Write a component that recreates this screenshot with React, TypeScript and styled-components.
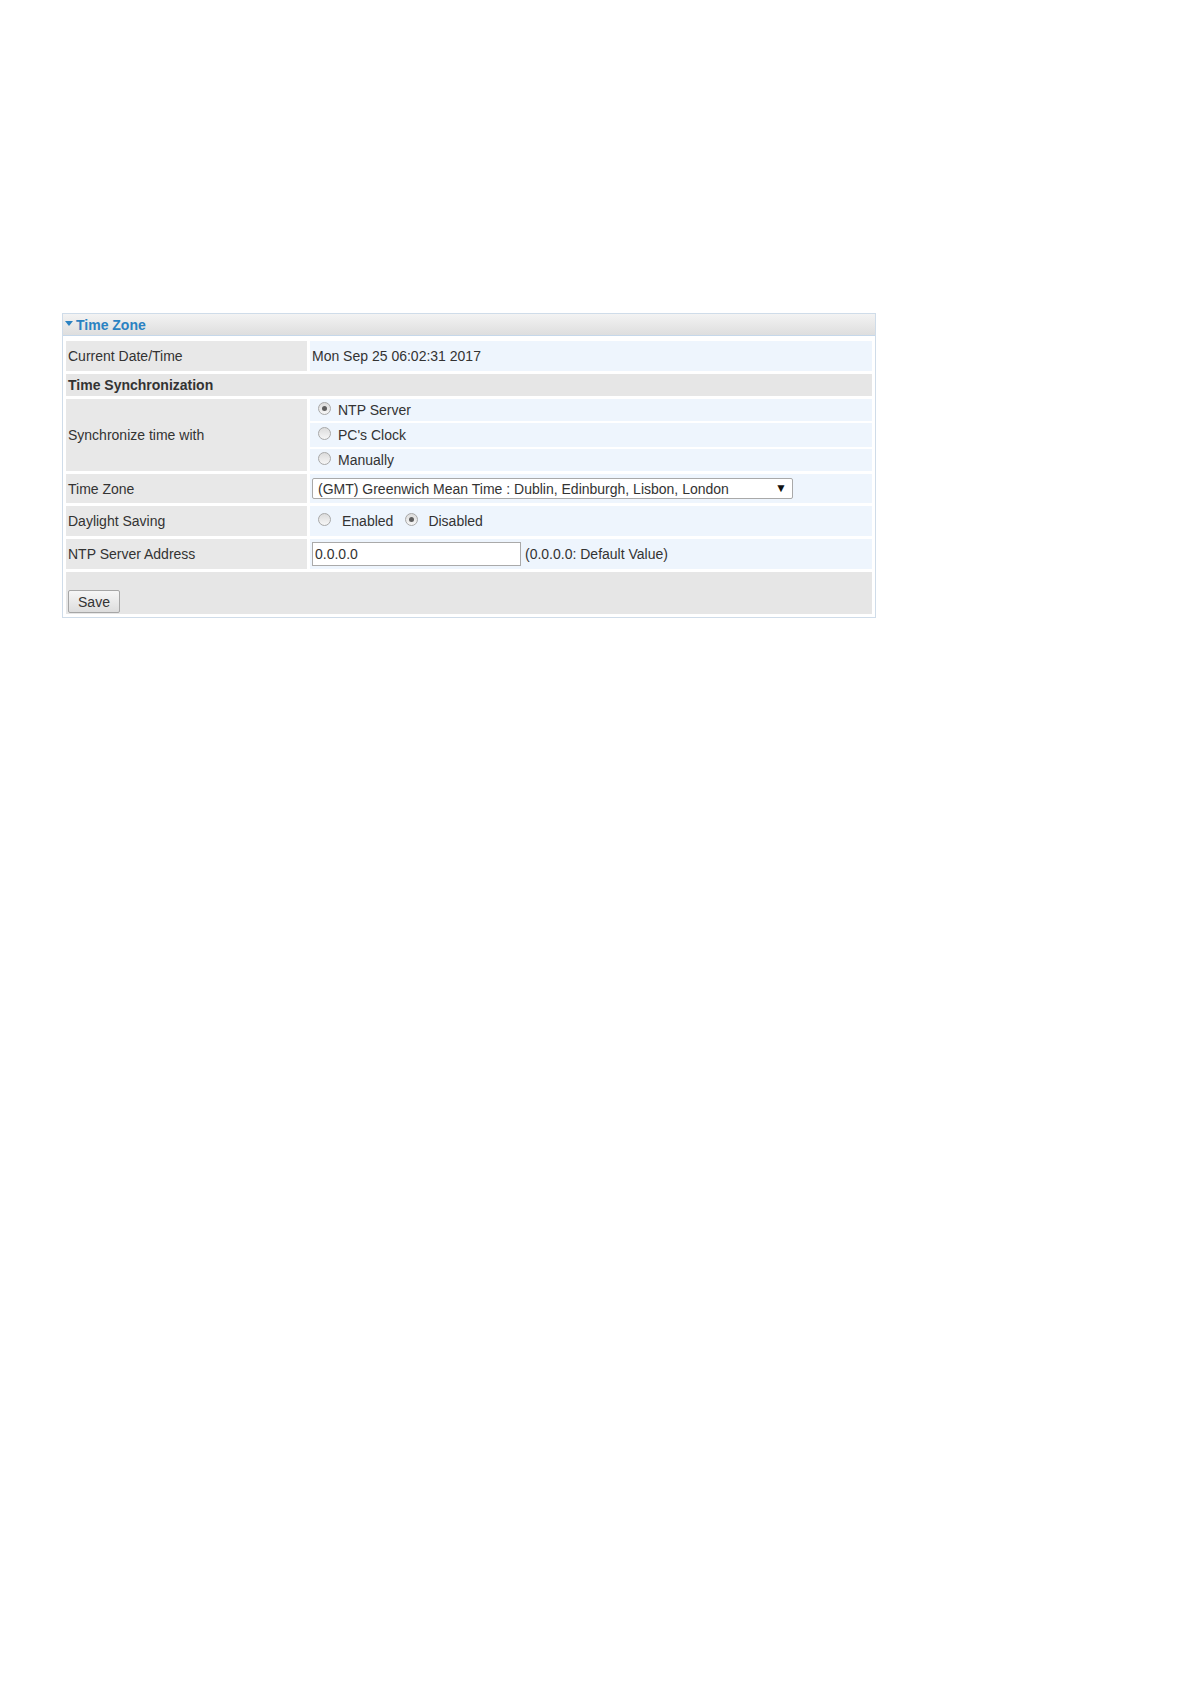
import React from "react";
import styled, { createGlobalStyle } from "styled-components";

const GlobalStyle = createGlobalStyle`
  html, body {
    margin: 0;
    padding: 0;
    background: #ffffff;
  }
  body {
    font-family: "Liberation Sans", Arial, sans-serif;
    font-size: 14px;
    color: #333333;
  }
`;

const Page = styled.div`
  padding: 313px 0 0 62px;
  min-height: 1684px;
  box-sizing: border-box;
`;

const Panel = styled.section`
  width: 814px;
  box-sizing: border-box;
  border: 1px solid #cfdce9;
`;

const PanelHeader = styled.div`
  height: 21px;
  display: flex;
  align-items: center;
  gap: 3px;
  padding-left: 2px;
  background: linear-gradient(#f3f3f3, #dedede);
  border-bottom: 1px solid #c6d8ea;
  color: #2a82c2;
  font-weight: bold;
  font-size: 14px;
`;

const Caret = styled.span`
  width: 0;
  height: 0;
  border-left: 4px solid transparent;
  border-right: 4px solid transparent;
  border-top: 5px solid #2a82c2;
  margin-top: -2px;
`;

const FormTable = styled.table`
  width: 100%;
  border-spacing: 3px;
  margin-top: 2px;
`;

const Row = styled.tr<{ $h?: number }>`
  height: ${(p) => p.$h ?? 30}px;
`;

const Label = styled.td`
  width: 237px;
  background: #e8e8e8;
  padding: 0 2px;
  vertical-align: middle;
  white-space: nowrap;
`;

const Value = styled.td<{ $plain?: boolean }>`
  background: ${(p) => (p.$plain ? "transparent" : "#eef5fd")};
  padding: ${(p) => (p.$plain ? "0" : "0 2px")};
  vertical-align: middle;
  white-space: nowrap;
`;

const Section = styled.td`
  background: #e6e6e6;
  font-weight: bold;
  padding: 0 2px;
`;

const Options = styled.div`
  display: flex;
  flex-direction: column;
  gap: 2px;
`;

const OptionRow = styled.div<{ $h: number }>`
  height: ${(p) => p.$h}px;
  background: #eef5fd;
  display: flex;
  align-items: center;
  padding-left: 8px;
`;

const Radio = styled.span<{ $checked?: boolean; $gap?: number }>`
  display: inline-block;
  box-sizing: border-box;
  width: 13px;
  height: 13px;
  border-radius: 50%;
  border: 1px solid #a8a8a8;
  background: linear-gradient(#dcdcdc, #f6f6f6);
  margin-right: ${(p) => p.$gap ?? 7}px;
  margin-top: -4px;
  position: relative;
  flex: none;
  &::after {
    content: "";
    display: ${(p) => (p.$checked ? "block" : "none")};
    position: absolute;
    left: 3px;
    top: 3px;
    width: 5px;
    height: 5px;
    border-radius: 50%;
    background: #5e5e5e;
  }
`;

const Inline = styled.div`
  display: flex;
  align-items: center;
  padding-left: 6px;
`;

const InlineText = styled.span<{ $mr?: number }>`
  margin-right: ${(p) => p.$mr ?? 0}px;
`;

const SelectBox = styled.div`
  position: relative;
  width: 481px;
  height: 21px;
`;

const Select = styled.select`
  appearance: none;
  width: 100%;
  height: 100%;
  box-sizing: border-box;
  border: 1px solid #a9a9a9;
  border-radius: 2px;
  background: #ffffff;
  font-family: "Liberation Sans", Arial, sans-serif;
  font-size: 14px;
  color: #333333;
  padding: 0 0 0 5px;
  margin: 0;
`;

const SelectArrow = styled.span`
  position: absolute;
  right: 6px;
  top: 3px;
  font-size: 12px;
  color: #111;
  pointer-events: none;
`;

const TextInput = styled.input`
  width: 209px;
  height: 24px;
  box-sizing: border-box;
  border: 1px solid #aaaaaa;
  padding: 0 2px;
  font-family: "Liberation Sans", Arial, sans-serif;
  font-size: 14px;
  color: #333333;
  margin: 0 4px 0 0;
`;

const FieldLine = styled.div`
  display: flex;
  align-items: center;
`;

const FooterCell = styled.td`
  background: #e6e6e6;
  vertical-align: bottom;
  padding: 0 0 1px 2px;
`;

const Button = styled.button`
  width: 52px;
  height: 23px;
  border: 1px solid #a6a6a6;
  border-radius: 2px;
  background: linear-gradient(#f6f6f6, #dddddd);
  font-family: "Liberation Sans", Arial, sans-serif;
  font-size: 14px;
  color: #333333;
  padding: 0;
`;

export default function App() {
  return (
    <Page>
      <GlobalStyle />
      <Panel>
        <PanelHeader>
          <Caret />
          Time Zone
        </PanelHeader>
        <FormTable>
          <tbody>
            <Row $h={30}>
              <Label>Current Date/Time</Label>
              <Value>Mon Sep 25 06:02:31 2017</Value>
            </Row>
            <Row $h={22}>
              <Section colSpan={2}>Time Synchronization</Section>
            </Row>
            <Row $h={72}>
              <Label>Synchronize time with</Label>
              <Value $plain>
                <Options>
                  <OptionRow $h={22}>
                    <Radio $checked />
                    NTP Server
                  </OptionRow>
                  <OptionRow $h={24}>
                    <Radio />
                    PC's Clock
                  </OptionRow>
                  <OptionRow $h={22}>
                    <Radio />
                    Manually
                  </OptionRow>
                </Options>
              </Value>
            </Row>
            <Row $h={29}>
              <Label>Time Zone</Label>
              <Value>
                <SelectBox>
                  <Select defaultValue="gmt">
                    <option value="gmt">
                      (GMT) Greenwich Mean Time : Dublin, Edinburgh, Lisbon, London
                    </option>
                  </Select>
                  <SelectArrow>▼</SelectArrow>
                </SelectBox>
              </Value>
            </Row>
            <Row $h={30}>
              <Label>Daylight Saving</Label>
              <Value>
                <Inline>
                  <Radio $gap={11} />
                  <InlineText $mr={12}>Enabled</InlineText>
                  <Radio $checked $gap={10} />
                  <InlineText>Disabled</InlineText>
                </Inline>
              </Value>
            </Row>
            <Row $h={30}>
              <Label>NTP Server Address</Label>
              <Value>
                <FieldLine>
                  <TextInput defaultValue="0.0.0.0" />
                  (0.0.0.0: Default Value)
                </FieldLine>
              </Value>
            </Row>
            <Row $h={42}>
              <FooterCell colSpan={2}>
                <Button>Save</Button>
              </FooterCell>
            </Row>
          </tbody>
        </FormTable>
      </Panel>
    </Page>
  );
}
